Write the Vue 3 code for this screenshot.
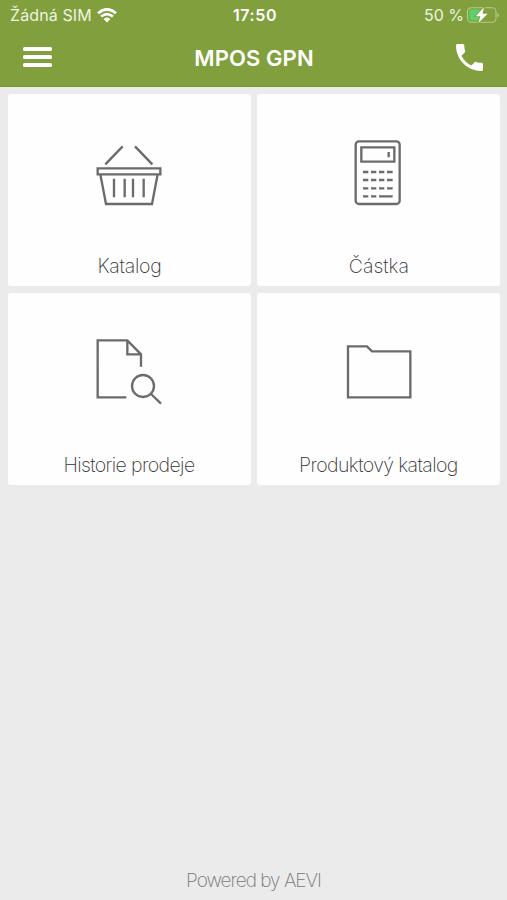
<script setup>
const tiles = [
  { id: 'basket', label: 'Katalog', box: '1 0 270 270' },
  { id: 'calculator', label: 'Částka', box: '-4 -1 270 270' },
  { id: 'history', label: 'Historie prodeje', box: '1 12 270 270' },
  { id: 'folder', label: 'Produktový katalog', box: '-3 12 270 270' },
]
</script>

<template>
  <div class="screen">
    <header class="header">
      <div class="status">
        <div class="carrier">
          <span class="carrier-name">Žádná SIM</span>
          <svg class="wifi" viewBox="0 0 20 15" width="20" height="15">
            <path d="M1 5.2Q10-2.6 19 5.2M4.1 8.5Q10 3.6 15.9 8.5" fill="none" stroke="currentColor" stroke-width="2.7" />
            <path d="M6.6 11Q10 8.2 13.4 11L10 14.6Z" fill="currentColor" />
          </svg>
        </div>
        <span class="clock">17:50</span>
        <div class="power">
          <span class="percent">50 %</span>
          <svg class="battery" viewBox="0 0 34 18" width="34" height="18">
            <rect x="1.5" y="1.8" width="28.5" height="14.4" rx="4" fill="none" stroke="#b7ca8f" stroke-width="1.1" />
            <path d="M31.4 7v4.3q1.6-.5 1.6-2.1T31.4 7Z" fill="#b7ca8f" />
            <path d="M5.5 3.6H15V14.4H5.5Q3.3 14.4 3.3 12V6Q3.3 3.6 5.5 3.6Z" fill="#5bd06b" />
            <path d="M18 1.3L9.7 10.2H14.4L12.5 16.9L21.6 7.7H16.5Z" fill="#fff" stroke="#819f3d" stroke-width="1.8" paint-order="stroke" />
          </svg>
        </div>
      </div>
      <div class="bar">
        <button class="menu" aria-label="Menu"><i></i><i></i><i></i></button>
        <h1 class="title">MPOS GPN</h1>
        <button class="call" aria-label="Telefon">
          <svg viewBox="3 3 18 18" width="27" height="27">
            <path fill="currentColor" d="M6.62 10.79c1.44 2.83 3.76 5.14 6.59 6.59l2.2-2.2c.27-.27.67-.36 1.02-.24 1.12.37 2.33.57 3.57.57.55 0 1 .45 1 1V20c0 .55-.45 1-1 1-9.39 0-17-7.61-17-17 0-.55.45-1 1-1h3.5c.55 0 1 .45 1 1 0 1.25.2 2.45.57 3.57.11.35.03.74-.25 1.02z" />
          </svg>
        </button>
      </div>
    </header>

    <main class="grid">
      <section v-for="t in tiles" :key="t.id" class="tile">
        <svg class="icon" :viewBox="t.box" width="90" height="90">
          <template v-if="t.id === 'basket'">
            <path d="M62 103L114 49M151 49L203 103" />
            <path d="M39 115H227V133H39ZM47 133L64 222H202L219 133" />
            <path d="M88 146V202M120 146V202M145 146V202M177 146V202" />
          </template>
          <template v-else-if="t.id === 'calculator'">
            <rect x="61" y="33" width="132" height="188" rx="10" />
            <path d="M78 51H177V94H78ZM160 65V81" />
            <path d="M83 125H99M107 125H123M131 125H147M155 125H172M83 149H99M107 149H123M131 149H147M155 149H172M83 174H99M107 174H123M131 174H147M155 174H172M83 198H99M107 198H123M131 198H172" />
          </template>
          <template v-else-if="t.id === 'history'">
            <path d="M125 217H39V46H128L169 88V125M128 46V88H169" />
            <circle cx="175" cy="183" r="33" />
            <path d="M199 207L229 236" />
          </template>
          <path v-else d="M39 64H96L111 79H226V217H39Z" />
        </svg>
        <span class="label" :class="t.id">{{ t.label }}</span>
      </section>
    </main>

    <footer class="footer">Powered by AEVI</footer>
  </div>
</template>

<style>
body {
  margin: 0;
  background: #ebebeb;
}
</style>

<style scoped>
.screen {
  box-sizing: border-box;
  width: 507px;
  height: 900px;
  display: flex;
  flex-direction: column;
  background: #ebebeb;
  font-family: Inter, "Liberation Sans", sans-serif;
  overflow: hidden;
}
.header {
  box-sizing: border-box;
  height: 87px;
  background: #819f3d;
  border-bottom: 1px solid #789536;
  color: #fff;
}
.status {
  height: 30px;
  display: grid;
  grid-template-columns: 1fr auto 1fr;
  align-items: center;
  padding: 0 7px 0 10px;
  font-size: 16px;
  line-height: 30px;
  color: #eef3e2;
}
.carrier,
.power {
  display: flex;
  align-items: center;
}
.carrier {
  gap: 5px;
}
.carrier-name {
  letter-spacing: 0.1px;
}
.wifi {
  color: #fff;
}
.clock {
  font-weight: 600;
  letter-spacing: 0.6px;
  color: #fff;
}
.power {
  justify-content: flex-end;
  gap: 2px;
}
.bar {
  height: 56px;
  display: grid;
  grid-template-columns: 1fr auto 1fr;
  align-items: center;
  padding: 0 24px 0 23px;
}
button {
  border: 0;
  padding: 0;
  background: none;
  color: #fff;
}
.menu {
  display: flex;
  flex-direction: column;
  gap: 4px;
  width: 29px;
  padding-bottom: 2px;
}
.menu i {
  height: 4px;
  border-radius: 1.5px;
  background: #fff;
}
.title {
  margin: 0;
  padding-left: 2px;
  font-size: 22px;
  font-weight: 600;
  line-height: 56px;
  letter-spacing: 0.1px;
}
.call {
  justify-self: end;
  display: flex;
  padding-bottom: 2px;
}
.grid {
  display: grid;
  grid-template-columns: 243px 243px;
  grid-auto-rows: 192px;
  gap: 7px 6.4px;
  padding: 7px 7px 0 8px;
}
.tile {
  box-sizing: border-box;
  display: flex;
  flex-direction: column;
  align-items: center;
  padding-top: 36px;
  border-radius: 3px;
  background: #fefefe;
}
.icon {
  flex: none;
  fill: none;
  stroke: #6b6b6b;
  stroke-width: 7;
}
.label {
  margin-top: 32px;
  font-size: 19.5px;
  font-weight: 200;
  line-height: 29px;
  white-space: nowrap;
  color: #333;
}
.label.basket {
  letter-spacing: -0.25px;
}
.label.history,
.label.folder {
  letter-spacing: -0.6px;
  padding-right: 1px;
}
.footer {
  margin-top: auto;
  height: 40px;
  line-height: 41px;
  text-align: center;
  font-size: 19px;
  font-weight: 200;
  letter-spacing: -1px;
  color: #757575;
}
</style>
